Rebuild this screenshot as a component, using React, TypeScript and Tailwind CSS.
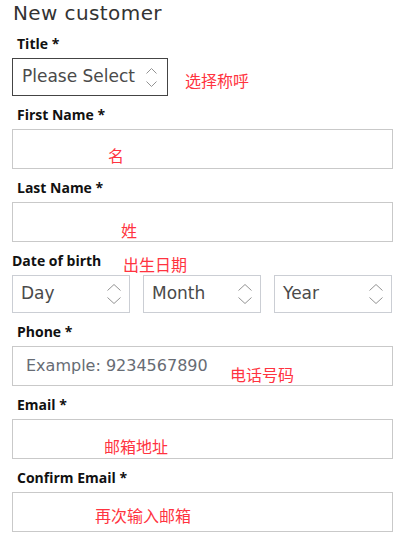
import React from "react";

const label = "text-[14px] leading-[19px] h-[19px] font-bold text-[#111] [font-family:'Open_Sans',sans-serif]";
const cjk = "absolute text-[16px] leading-[16px] text-[#ff3340] whitespace-nowrap [font-family:'Noto_Sans_CJK_SC',sans-serif]";
const body = "[font-family:'DejaVu_Sans',sans-serif] text-[16px]";
const sel = "[font-family:'DejaVu_Sans',sans-serif] text-[17px]";

function Chev({ w, h }: { w: number; h: number }) {
  const half = w / 2;
  const arm = w === 11 ? 5 : 6;
  return (
    <svg width={w} height={h} viewBox={`0 0 ${w} ${h}`} fill="none" stroke="#939393" strokeWidth="1">
      <path d={`M0.5 ${arm + 0.5} L${half} 0.5 L${w - 0.5} ${arm + 0.5}`} />
      <path d={`M0.5 ${h - arm - 0.5} L${half} ${h - 0.5} L${w - 0.5} ${h - arm - 0.5}`} />
    </svg>
  );
}

function Field({ name, children }: { name: string; children: React.ReactNode }) {
  return (
    <div className="mt-[9px]">
      <div className={`${label} pl-[5px]`}>{name}</div>
      <div className="mt-[5px] relative w-[381px] h-[40px] border border-[#c9c9c9] bg-white">{children}</div>
    </div>
  );
}

function DobSelect({ text }: { text: string }) {
  return (
    <div className={`${sel} h-[38px] border border-[#cbced4] flex items-center justify-between pl-[8px] pr-[8px] text-[#4a4a4a]`}>
      <span>{text}</span>
      <Chev w={14} h={20} />
    </div>
  );
}

export default function App() {
  return (
    <div className="w-[418px] h-[537px] bg-white px-3 pt-[1px] overflow-hidden">
      <h1 className="[font-family:'DejaVu_Sans',sans-serif] text-[20px] leading-[24px] text-[#333] tracking-[0.4px] pl-[1px]">
        New customer
      </h1>

      <div className="mt-[9px]">
        <div className={`${label} pl-[5px]`}>Title *</div>
        <div className="mt-[5px] flex items-start">
          <div className={`${sel} w-[156px] h-[38px] border border-[#444] flex items-center justify-between pl-[9px] pr-[10px] text-[#4a4a4a]`}>
            <span>Please Select</span>
            <Chev w={11} h={19} />
          </div>
          <span className="relative text-[16px] leading-[16px] text-[#ff3340] whitespace-nowrap [font-family:'Noto_Sans_CJK_SC',sans-serif] ml-[17px] mt-[14px]">
            选择称呼
          </span>
        </div>
      </div>

      <Field name="First Name *">
        <span className={`${cjk} left-[95px] top-[17px]`}>名</span>
      </Field>

      <Field name="Last Name *">
        <span className={`${cjk} left-[108px] top-[19px]`}>姓</span>
      </Field>

      <div className="mt-[9px]">
        <div className={`${label} relative`}>
          Date of birth
          <span className={`${cjk} left-[111px] top-[5px] font-normal`}>出生日期</span>
        </div>
        <div className="mt-[5px] w-[380px] grid grid-cols-3 gap-[13px]">
          <DobSelect text="Day" />
          <DobSelect text="Month" />
          <DobSelect text="Year" />
        </div>
      </div>

      <Field name="Phone *">
        <div className={`${body} h-full flex items-center pl-[13px] text-[#676c74]`}>Example: 9234567890</div>
        <span className={`${cjk} left-[217px] top-[19px]`}>电话号码</span>
      </Field>

      <Field name="Email *">
        <span className={`${cjk} left-[91px] top-[18px]`}>邮箱地址</span>
      </Field>

      <Field name="Confirm Email *">
        <span className={`${cjk} left-[82px] top-[14px]`}>再次输入邮箱</span>
      </Field>
    </div>
  );
}
